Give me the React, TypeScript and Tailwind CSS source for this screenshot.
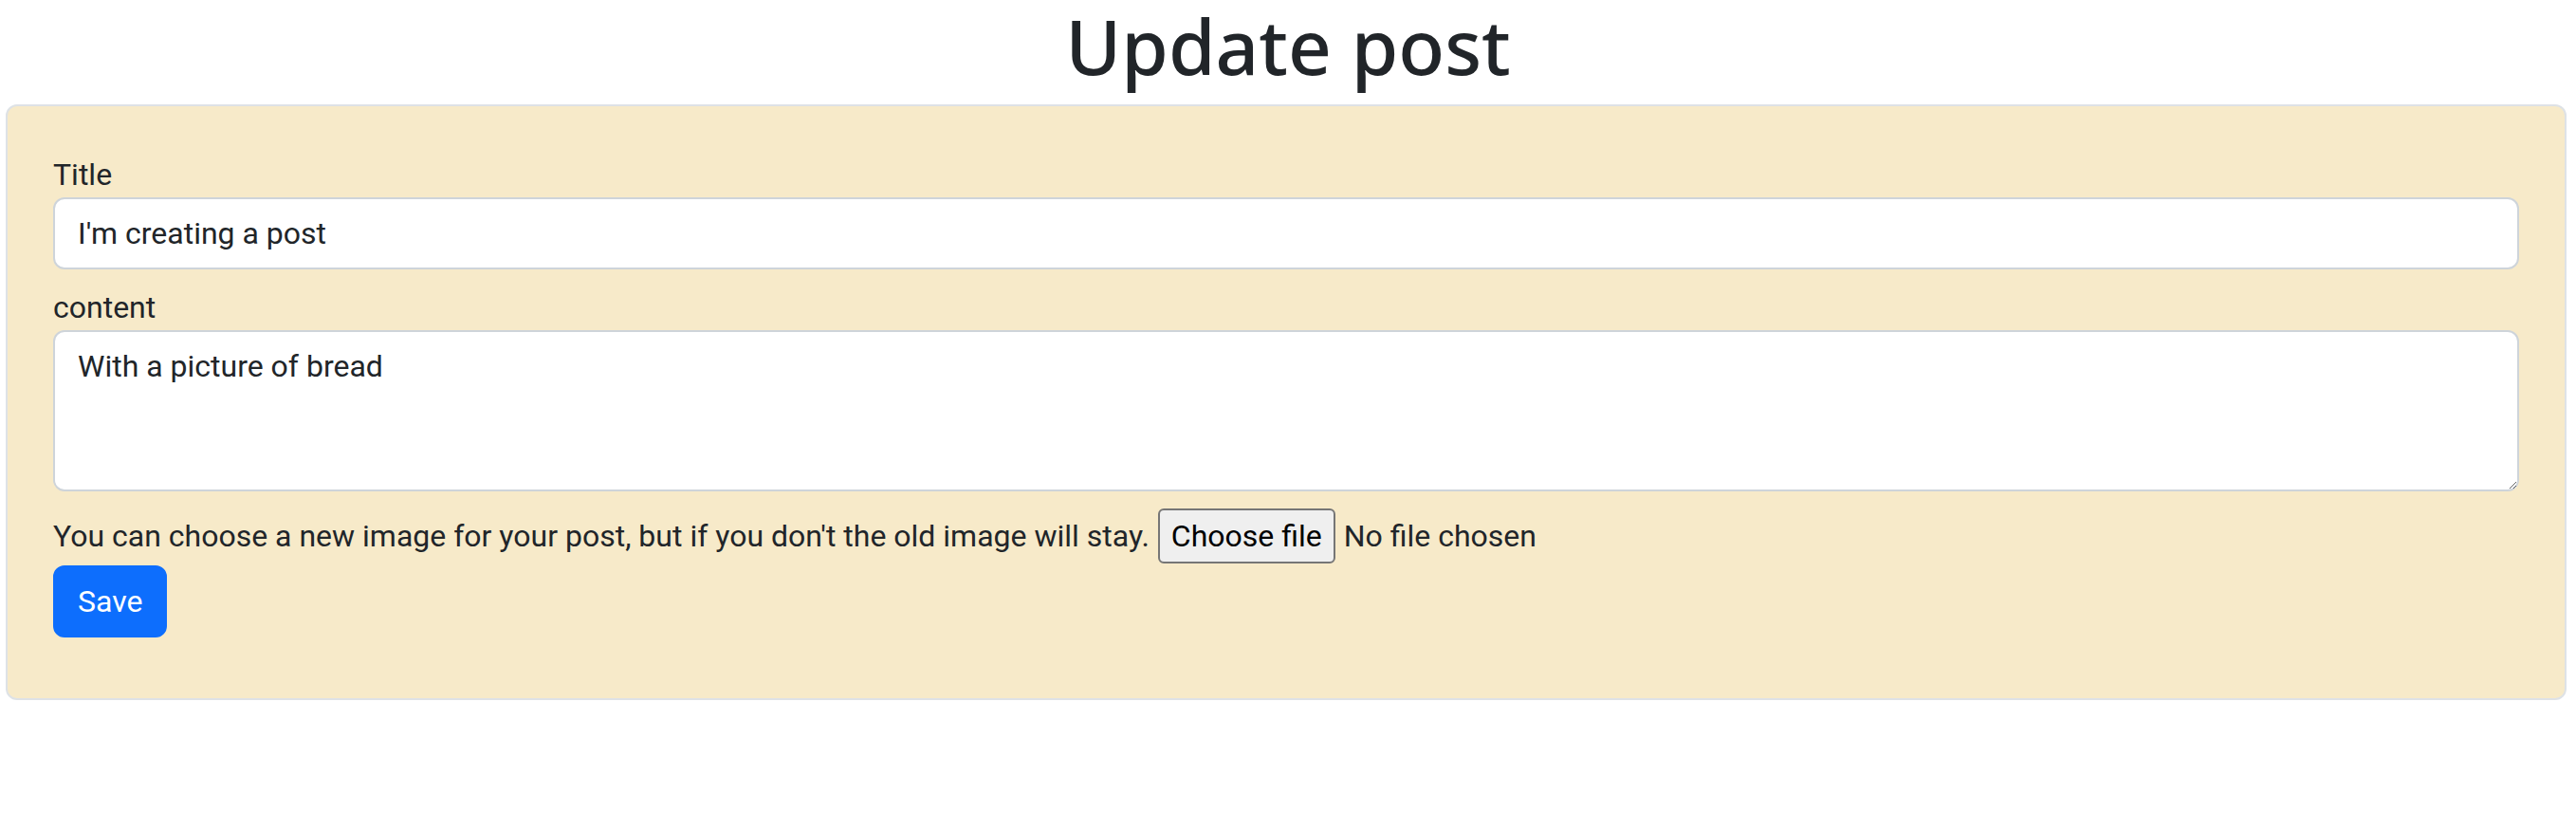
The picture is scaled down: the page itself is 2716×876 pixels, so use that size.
import { useState } from "react";

export default function App() {
  const [title, setTitle] = useState("I'm creating a post");
  const [content, setContent] = useState("With a picture of bread");

  return (
    <div className="min-h-screen bg-white font-['Roboto','Liberation_Sans',sans-serif] text-[#212529]">
      <h1 className="mb-[14px] text-center font-['Noto_Sans','Open_Sans',sans-serif] text-[80px] font-medium leading-[96px]">
        Update post
      </h1>

      <div className="ml-[6px] mr-[10px] rounded-[12px] border-2 border-[#dee2e6] bg-[#f7eac9] px-[48px] pt-[48px] pb-[64px] text-[32px] leading-[48px]">
        <form onSubmit={(e) => e.preventDefault()}>
          <label htmlFor="title" className="block">
            Title
          </label>
          <input
            id="title"
            value={title}
            onChange={(e) => setTitle(e.target.value)}
            className="block h-[76px] w-full rounded-[12px] border-2 border-[#ced4da] bg-white px-[24px] text-[32px] leading-[48px] text-[#212529] outline-none"
          />

          <label htmlFor="content" className="mt-[16px] block">
            content
          </label>
          <textarea
            id="content"
            value={content}
            onChange={(e) => setContent(e.target.value)}
            className="block h-[170px] w-full rounded-[12px] border-2 border-[#ced4da] bg-white px-[24px] py-[12px] text-[32px] leading-[48px] text-[#212529] outline-none"
          />

          {/* file picker, drawn by hand so the label text is fixed */}
          <div className="mt-[18px] flex h-[58px] items-center">
            <span>You can choose a new image for your post, but if you don't the old image will stay.</span>
            <label className="ml-[9px] flex cursor-pointer items-center">
              <input type="file" accept="image/*" className="hidden" />
              <span className="flex h-[58px] items-center rounded-[6px] border-2 border-[#767676] bg-[#efefef] px-[12px] text-black">
                Choose file
              </span>
              <span className="ml-[9px]">No file chosen</span>
            </label>
          </div>

          <button
            type="submit"
            className="mt-[2px] block h-[76px] rounded-[12px] border-2 border-[#0d6efd] bg-[#0d6efd] px-[24px] text-[32px] leading-[48px] text-white"
          >
            Save
          </button>
        </form>
      </div>
    </div>
  );
}
